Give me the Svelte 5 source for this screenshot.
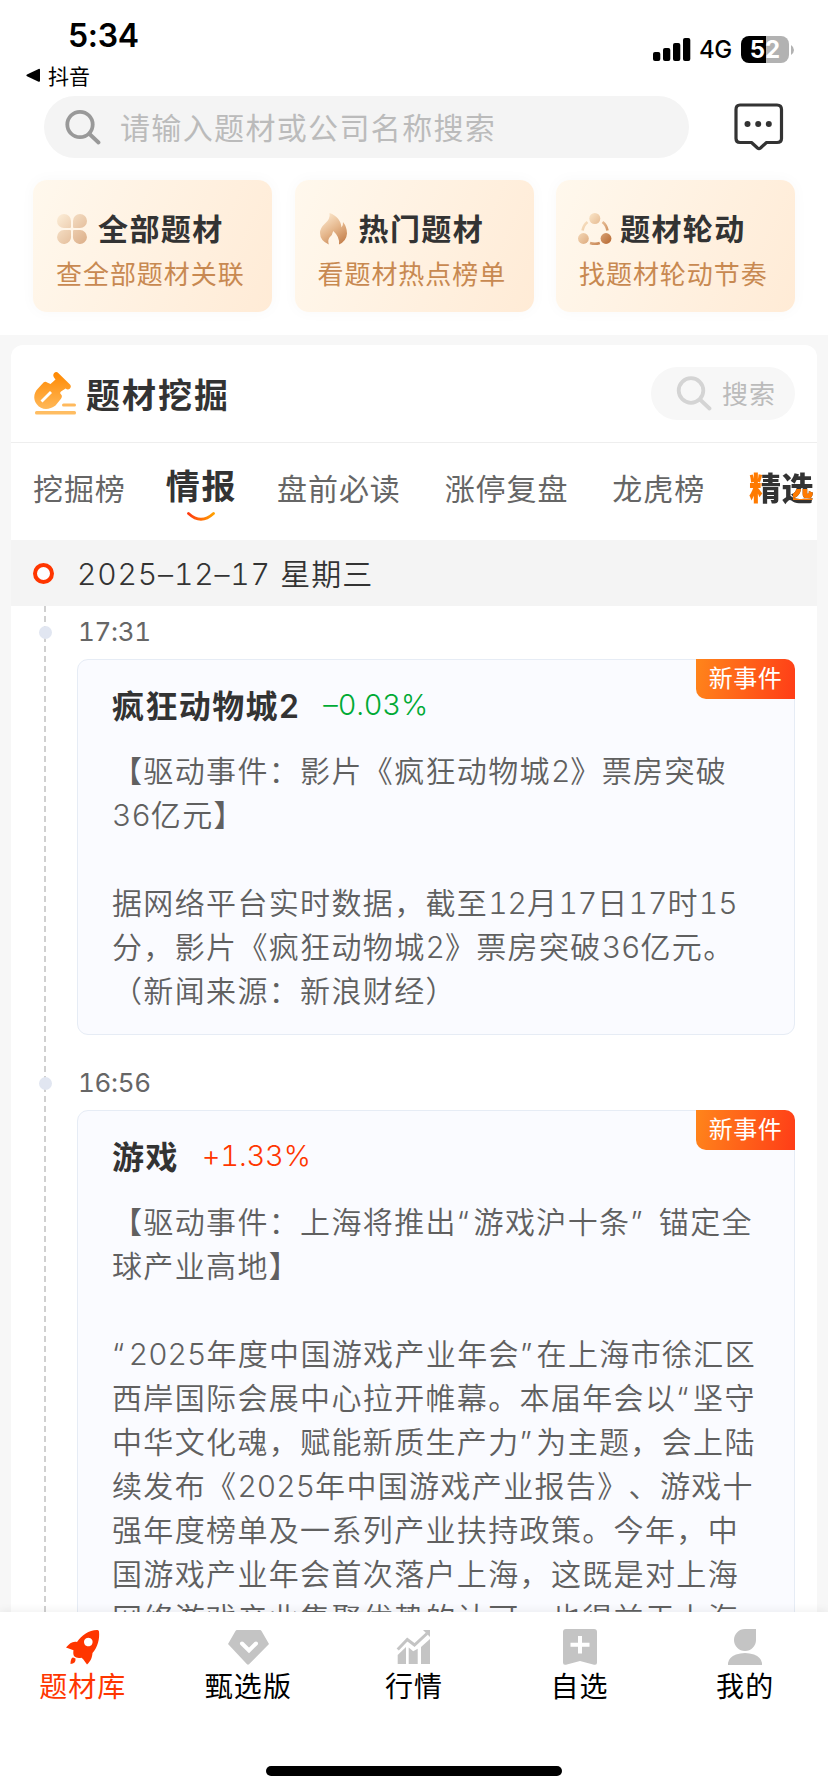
<script lang="ts">
  type NewsItem = {
    time: string;
    topic: string;
    change: number;
    badge: string;
    lines: string[];
  };

  const shortcuts = [
    { icon: 'clover', title: '全部题材', sub: '查全部题材关联' },
    { icon: 'flame', title: '热门题材', sub: '看题材热点榜单' },
    { icon: 'cycle', title: '题材轮动', sub: '找题材轮动节奏' },
  ];

  const tabs = ['挖掘榜', '情报', '盘前必读', '涨停复盘', '龙虎榜'];
  let activeTab = $state('情报');

  const news: NewsItem[] = [
    {
      time: '17:31',
      topic: '疯狂动物城2',
      change: -0.03,
      badge: '新事件',
      lines: [
        '【驱动事件：影片《疯狂动物城2》票房突破',
        '36亿元】',
        '',
        '据网络平台实时数据，截至12月17日17时15',
        '分，影片《疯狂动物城2》票房突破36亿元。',
        '（新闻来源：新浪财经）',
      ],
    },
    {
      time: '16:56',
      topic: '游戏',
      change: 1.33,
      badge: '新事件',
      lines: [
        '【驱动事件：上海将推出“游戏沪十条” 锚定全',
        '球产业高地】',
        '',
        '“2025年度中国游戏产业年会”在上海市徐汇区',
        '西岸国际会展中心拉开帷幕。本届年会以“坚守',
        '中华文化魂，赋能新质生产力”为主题，会上陆',
        '续发布《2025年中国游戏产业报告》、游戏十',
        '强年度榜单及一系列产业扶持政策。今年，中',
        '国游戏产业年会首次落户上海，这既是对上海',
        '网络游戏产业集聚优势的认可，也得益于上海',
      ],
    },
  ];

  const navItems = [
    { icon: 'rocket', label: '题材库' },
    { icon: 'gem', label: '甄选版' },
    { icon: 'chart', label: '行情' },
    { icon: 'bookmark', label: '自选' },
    { icon: 'user', label: '我的' },
  ];
  let activeNav = $state('题材库');

  function formatChange(v: number): string {
    return (v < 0 ? '–' : '+') + Math.abs(v).toFixed(2) + '%';
  }

  // digits and quotes are tracked differently from the Chinese text
  function segments(line: string): { text: string; kind: string }[] {
    return line
      .split(/(\d+|[“”])/)
      .filter((s) => s)
      .map((s) => ({ text: s, kind: /\d/.test(s) ? 'num' : /[“”]/.test(s) ? 'quote' : 'han' }));
  }
</script>

<div class="screen">
  <header class="status">
    <div class="status-left">
      <span class="clock">5:34</span>
      <span class="back">
        <svg width="15" height="15" viewBox="0 0 15 15"><path d="M1 6.4 12.6.9Q14 .4 14 2v10.6q0 1.600-1.400 1.100L1 8.200Q-.4 7.300 1 6.400z" /></svg>
        抖音
      </span>
    </div>
    <div class="status-right">
      <svg width="38" height="24" viewBox="0 0 38 24">
        <rect x="0" y="14" width="7.300" height="9" rx="2" />
        <rect x="10" y="10" width="7.300" height="13" rx="2" />
        <rect x="20" y="5" width="7.300" height="18" rx="2" />
        <rect x="30" y="0" width="7.300" height="23" rx="2" />
      </svg>
      <span class="net">4G</span>
      <span class="battery">52</span>
      <svg class="cap" width="3" height="10" viewBox="0 0 3 10"><path d="M0 0q3 2 3 5T0 10z" fill="#b2b2b2" /></svg>
    </div>
  </header>

  <div class="top-search">
    <div class="search-box">
      <svg width="36" height="36" viewBox="0 0 36 36" fill="none" stroke="#999" stroke-width="3.800" stroke-linecap="round">
        <circle cx="15" cy="15.500" r="12.700" /><path d="M24.500 25 33.500 33.500" />
      </svg>
      <span>请输入题材或公司名称搜索</span>
    </div>
    <svg class="message" width="50" height="48" viewBox="0 0 50 48">
      <path d="M6 2h37q4.500 0 4.500 4.500v29q0 4-4.500 4h-10.500L26.500 45q-1.500 1.200-3 0L17.500 39.500H6q-4 0-4-4v-29Q2 2 6 2z" fill="none" stroke="#333" stroke-width="3.200" stroke-linejoin="round" />
      <g fill="#333"><circle cx="13.500" cy="21" r="3" /><circle cx="24.200" cy="21" r="3" /><circle cx="34.800" cy="21" r="3" /></g>
    </svg>
  </div>

  <section class="shortcuts">
    {#each shortcuts as s (s.title)}
      <div class="shortcut">
        <div class="shortcut-title">
          {#if s.icon === 'clover'}
            <svg class="ic-clover" width="30" height="30" viewBox="0 0 30 30">
              <defs><linearGradient id="clover" x1="0" y1="0" x2="30" y2="30" gradientUnits="userSpaceOnUse"><stop stop-color="#fdeed8" /><stop offset="1" stop-color="#dcae88" /></linearGradient></defs>
              <path fill="url(#clover)" d="M7 0a7 7 0 0 1 7 7v6q0 1-1 1H7A7 7 0 0 1 7 0zM23 0a7 7 0 0 1 0 14h-6q-1 0-1-1V7a7 7 0 0 1 7-7zM7 16h6q1 0 1 1v5a7 7 0 1 1-7-6zM17 16h6a7 7 0 1 1-7 6v-5q0-1 1-1z" />
            </svg>
          {:else if s.icon === 'flame'}
            <svg class="ic-flame" width="27" height="32" viewBox="0 0 27 32">
              <defs><linearGradient id="flame" x1="4" y1="2" x2="24" y2="31" gradientUnits="userSpaceOnUse"><stop stop-color="#fce7cc" /><stop offset=".5" stop-color="#e4b58a" /><stop offset="1" stop-color="#c27c48" /></linearGradient></defs>
              <path fill="url(#flame)" d="M9.500 0C17 2.500 21 8 21.500 14.500q1.800-2 1.500-5.500Q27 14 27 20.500 26.500 28 19 31.500q1-7.500-5.800-13.500Q12.500 22 9.500 24.500 7.500 27 8.800 31.500 0 27.500 0 20q0-5 5-9.500Q10.500 6 9.500 0z" />
            </svg>
          {:else}
            <svg class="ic-cycle" width="34" height="33" viewBox="0 0 34 33">
              <defs><linearGradient id="cycle" x1="5" y1="4" x2="31" y2="29" gradientUnits="userSpaceOnUse"><stop stop-color="#fdebcf" /><stop offset=".5" stop-color="#e5b990" /><stop offset="1" stop-color="#bd733e" /></linearGradient></defs>
              <g fill="url(#cycle)"><circle cx="16.800" cy="5.500" r="5.500" /><circle cx="5.400" cy="25.500" r="5.400" /><circle cx="28" cy="25.500" r="5.400" /></g>
              <g fill="none" stroke="url(#cycle)" stroke-width="2.600"><path d="M4.500 17.500Q5.500 12 9.500 9M24.500 9q4 3 5 8.500M12 30q5 1.600 9.800 0" /></g>
            </svg>
          {/if}
          <span>{s.title}</span>
        </div>
        <div class="shortcut-sub">{s.sub}</div>
      </div>
    {/each}
  </section>

  <div class="backdrop">
    <main class="panel">
      <div class="panel-head">
        <svg width="42" height="43" viewBox="0 0 42 43">
          <defs><linearGradient id="dig" x1="0" y1="0" x2="0" y2="43" gradientUnits="userSpaceOnUse"><stop stop-color="#ff8800" /><stop offset="1" stop-color="#ffc067" /></linearGradient></defs>
          <path fill="url(#dig)" d="M20 1.200q2.200-2.200 4.500 0L36 12.500q1.800 2.300-.2 4.200-2 1.600-4.200-.2L27 19.500l-1 1.500 1.800 2.500q.4 1.500-.8 3.200l-5.500 6.800C15 38.500 7 38 3 32.500-1.500 27 0 20.500 4 16.500L9.500 10.500q2-1.500 3.600 0L16.500 12l5-4.500L20 5.500Q18.500 3 20 1.200z" />
          <path d="M7.500 29.500 17 20" stroke="#fff" stroke-width="2.800" />
          <rect x="28" y="31.500" width="14" height="3" rx="1.500" fill="#ffb95c" />
          <rect x="1" y="39" width="41" height="3.500" rx="1.500" fill="#ffbd62" />
        </svg>
        <h2>题材挖掘</h2>
        <div class="mini-search">
          <svg width="36" height="35" viewBox="0 0 36 35" fill="none" stroke="#d4d4d4" stroke-width="3.800" stroke-linecap="round">
            <circle cx="15" cy="14.500" r="12.300" /><path d="M24.500 24 33.500 32.500" />
          </svg>
          <span>搜索</span>
        </div>
      </div>

      <nav class="tabs">
        {#each tabs as t (t)}
          <button class="tab" class:active={t === activeTab} onclick={() => (activeTab = t)}>
            {t}
            {#if t === activeTab}
              <svg class="smile" width="28" height="10" viewBox="0 0 28 10">
                <defs><linearGradient id="smile"><stop stop-color="#ff3b10" /><stop offset="1" stop-color="#ffa000" /></linearGradient></defs>
                <path d="M1.500 1.500Q14 13 26.500 1.500" fill="none" stroke="url(#smile)" stroke-width="2.800" stroke-linecap="round" />
              </svg>
            {/if}
          </button>
        {/each}
        <button class="tab picks"><span class="jing">精</span><span class="xuan">选</span></button>
      </nav>

      <div class="date-row">
        <i class="ring"></i>
        <span><span class="date">2025–12–17</span> 星期三</span>
      </div>

      <div class="timeline">
        {#each news as n (n.time)}
          <article class="item">
            <div class="time"><i class="dot"></i>{n.time}</div>
            <div class="card">
              <span class="badge">{n.badge}</span>
              <div class="card-head">
                <h3>{n.topic}</h3>
                <span class="change" class:down={n.change < 0}>{formatChange(n.change)}</span>
              </div>
              <div class="body">
                {#each n.lines as line}
                  <p>{#each segments(line) as seg}<span class={seg.kind}>{seg.text}</span>{/each}</p>
                {/each}
              </div>
            </div>
          </article>
        {/each}
      </div>
    </main>
  </div>

  <footer class="bottom">
    <div class="nav">
      {#each navItems as item (item.label)}
        <button class="nav-item" class:active={item.label === activeNav} onclick={() => (activeNav = item.label)}>
          <svg width="42" height="36" viewBox="0 0 42 36" fill="currentColor">
            {#if item.icon === 'rocket'}
              <path fill-rule="evenodd" d="M35.500 1q1.300 0 1.500 1.500c.8 7.500-1.200 15.500-6.500 21.500-.5 4.500-1.500 8-5.500 11.500l-4-5.500-1.500-1.200q-5 .8-7-1.200-1.800-2-1-6.300L4 18.500c3.500-4 6.500-6.500 11-5.500C20 6 27 .8 35.500 1zM26.300 8.700a4.300 4.300 0 1 0 .01 0z" />
              <path d="M13.500 29.500Q14 34.500 8.500 35 8.500 29 11 28.500z" />
            {:else if item.icon === 'gem'}
              <path d="M10 1h23q1 0 1.500 1L42 15 22 35.300Q21 36 20 35.300L1 15 8.500 2Q9 1 10 1z" />
              <path d="M15 14.500 22 21.500 29 14.500" fill="none" stroke="#fff" stroke-width="4" stroke-linecap="round" />
            {:else if item.icon === 'chart'}
              <path d="M4.700 26 13 18v17H4.700zM15.700 18.500l4.500 3.800 4.500-2.600V35h-9zM28 18l9-8v25h-9z" />
              <path d="M4.700 20.500 14.300 10.500 21.500 16 34 4.500" fill="none" stroke="currentColor" stroke-width="3" />
              <path d="M30 1h7v7z" />
            {:else if item.icon === 'bookmark'}
              <path d="M7 0h28q3 0 3 3v30.500q0 3-3 2.200L21 32 7 35.700q-3 .8-3-2.200V3q0-3 3-3z" />
              <path d="M21 7v17.500M11.500 15.700h19" fill="none" stroke="#fff" stroke-width="4" />
            {:else}
              <path d="M21 0h11v11A11 11 0 1 1 21 0zM4 36v-2q1-6 8-8.500 9-3 18 0 7 2.500 8 8.500v2z" />
            {/if}
          </svg>
          <span>{item.label}</span>
        </button>
      {/each}
    </div>
    <i class="home-bar"></i>
  </footer>
</div>

<style>
  :global(body) { background: #fff; }
  .screen {
    width: 828px; height: 1792px; overflow: hidden; box-sizing: border-box;
    display: flex; flex-direction: column; background: #fff;
    font-family: Inter, "Noto Sans CJK SC", sans-serif; color: #333;
    text-spacing-trim: space-all;
  }
  h2, h3, p { margin: 0; }
  button { border: 0; padding: 0; background: none; font: inherit; color: inherit; }
  svg { display: block; flex: none; }
  i { display: block; flex: none; }

  .status { flex: none; height: 96px; display: flex; justify-content: space-between; color: #000; }
  .status-left { padding: 16px 0 0 26px; }
  .clock { display: block; padding-left: 42px; font-size: 32px; line-height: 40px; font-weight: 600; letter-spacing: -0.3px; }
  .back { display: flex; align-items: center; gap: 7px; font-size: 21px; line-height: 24px; margin-top: 7px; font-family: "Noto Sans CJK SC", sans-serif; }
  .status-right { display: flex; align-items: center; height: 27px; padding: 36px 34px 0 0; }
  .net { font-size: 24px; font-weight: 500; margin-left: 8px; width: 32px; letter-spacing: -0.5px; }
  .battery {
    width: 48px; height: 27px; line-height: 27px; border-radius: 8px; margin-left: 10px; text-align: center;
    background: linear-gradient(90deg, #000 52%, #b2b2b2 52%); color: #fff; font-size: 24px; font-weight: 700;
  }
  .cap { margin-left: 2px; }

  .top-search { flex: none; display: flex; align-items: center; height: 62px; padding-left: 44px; }
  .search-box {
    width: 645px; height: 62px; border-radius: 31px; background: #f4f4f4; box-sizing: border-box;
    display: flex; align-items: center; padding-left: 21px; gap: 19px;
    font-size: 30px; letter-spacing: 1.35px; color: #bbb;
  }
  .search-box span { padding-bottom: 2px; }
  .message { margin-left: 45px; }

  .shortcuts { flex: none; display: flex; gap: 22.5px; padding: 22px 33px 23px; }
  .shortcut {
    flex: 1; height: 132px; border-radius: 14px; box-sizing: border-box; padding: 29px 0 0 23px;
    background: linear-gradient(115deg, #fff8ed, #ffebd6);
    box-shadow: 0 0 14px 2px rgba(0, 0, 0, 0.025); white-space: nowrap;
  }
  .shortcut-title { display: flex; align-items: center; height: 40px; font-size: 30px; font-weight: 600; letter-spacing: 1.4px; }
  .shortcut-title span { padding-bottom: 5px; }
  .ic-clover { margin: 0 11px 0 1px; }
  .ic-flame { margin: 0 12px 0 2px; }
  .ic-cycle { margin: 0 8px 0 -1px; }
  .shortcut-sub { font-size: 26px; line-height: 51px; letter-spacing: 0.95px; color: #c88951; }

  .backdrop { flex: 1; min-height: 0; display: flex; background: #f7f7f7; padding: 10px 11px 0; }
  .panel { flex: 1; min-width: 0; overflow: hidden; background: #fff; border-radius: 12px 12px 0 0; }
  .panel-head { display: flex; align-items: center; height: 97px; padding: 0 22px 0 23px; border-bottom: 1px solid #eee; }
  .panel-head h2 { margin-left: 10px; font-size: 34px; font-weight: 600; letter-spacing: 2px; flex: 1; }
  .mini-search {
    display: flex; align-items: center; gap: 10px; width: 144px; height: 53px; box-sizing: border-box;
    border-radius: 27px; background: #f7f7f7; padding-left: 25px; color: #bbb; font-size: 26px; letter-spacing: 0.9px;
  }
  .mini-search span { padding-bottom: 3px; }
  .tabs { display: flex; align-items: center; height: 97px; padding: 0 0 5px 22px; box-sizing: border-box; white-space: nowrap; }
  .tab { position: relative; flex: none; font-size: 30px; letter-spacing: 0.9px; line-height: 60px; color: #666; margin-right: 44px; }
  .tab:first-child { margin-right: 40px; }
  .tab.active { font-size: 34px; font-weight: 700; letter-spacing: 1.7px; color: #333; margin-right: 40px; padding-bottom: 5px; }
  .smile { position: absolute; left: 21px; bottom: 0; }
  .picks { display: flex; margin: 0; font-size: 32px; letter-spacing: 0.5px; font-weight: 900; line-height: 50px; }
  .picks span { display: block; color: transparent; background-clip: text; -webkit-background-clip: text; }
  .jing { background-image: linear-gradient(90deg, #ff7a00 39%, #333 39%); }
  .xuan {
    background-image: linear-gradient(#ff7a00, #ff7a00), linear-gradient(#333, #333);
    background-size: 21px 11px, 100% 100%; background-position: 11px 25px, 0 0; background-repeat: no-repeat;
  }

  .date-row { display: flex; align-items: center; height: 66px; padding-left: 22px; gap: 23px; background: #f4f4f4; font-size: 30px; font-weight: 350; letter-spacing: 1px; }
  .date-row > span { padding-bottom: 2px; }
  .date { font-feature-settings: "tnum"; letter-spacing: 0.85px; }
  .ring { width: 13px; height: 13px; border: 4.5px solid #ff3600; border-radius: 50%; background: #fff; }

  .timeline {
    padding: 0 22px 0 66px;
    background: repeating-linear-gradient(#d0d0d0 0 6px, transparent 6px 10px) 33px 0 / 2px 100% no-repeat;
  }
  .item { padding-bottom: 22px; }
  .time { position: relative; height: 53px; line-height: 51px; padding-left: 1px; font-size: 26px; font-feature-settings: "tnum"; letter-spacing: -0.3px; color: #666; }
  .dot { position: absolute; left: -38px; top: 20px; width: 13px; height: 13px; border-radius: 50%; background: #e1e6f1; }
  .card { position: relative; border: 1px solid #e6ecf5; border-radius: 11px; background: #fafbff; padding: 22px 0 21px 34px; }
  .badge {
    position: absolute; right: -1px; top: -1px; width: 99px; height: 40px; line-height: 40px; text-align: center;
    border-radius: 0 10px 0 10px; background: linear-gradient(100deg, #ff851b, #ff3d17); color: #fff; font-size: 24px; letter-spacing: 0.5px;
  }
  .card-head { display: flex; align-items: center; height: 44px; margin-bottom: 23px; }
  .card-head h3 { font-size: 32px; font-weight: 600; letter-spacing: 1.4px; }
  .change { margin-left: 23px; padding-top: 1px; font-size: 29px; font-weight: 350; font-feature-settings: "tnum"; letter-spacing: -0.2px; color: #ff3600; }
  .change.down { color: #00aa35; }
  .body p {
    height: 44px; line-height: 44px; font-size: 30px; font-weight: 350;
    letter-spacing: 1.35px; word-spacing: 2px; color: #606060; white-space: pre;
  }
  .num { font-feature-settings: "tnum"; letter-spacing: 0; }
  .quote { letter-spacing: 4.5px; }

  .bottom { flex: none; height: 180px; background: #fff; box-shadow: 0 -2px 8px rgba(0, 0, 0, 0.06); position: relative; }
  .nav { display: flex; padding-top: 17px; height: 137px; }
  .nav-item { flex: 1; display: flex; flex-direction: column; align-items: center; color: #c4c4c4; }
  .nav-item span { font-size: 28px; line-height: 44px; letter-spacing: 1.1px; color: #000; }
  .nav-item.active, .nav-item.active span { color: #ff3600; }
  .home-bar { width: 296px; height: 10px; border-radius: 5px; background: #000; margin: 0 auto; }
</style>
